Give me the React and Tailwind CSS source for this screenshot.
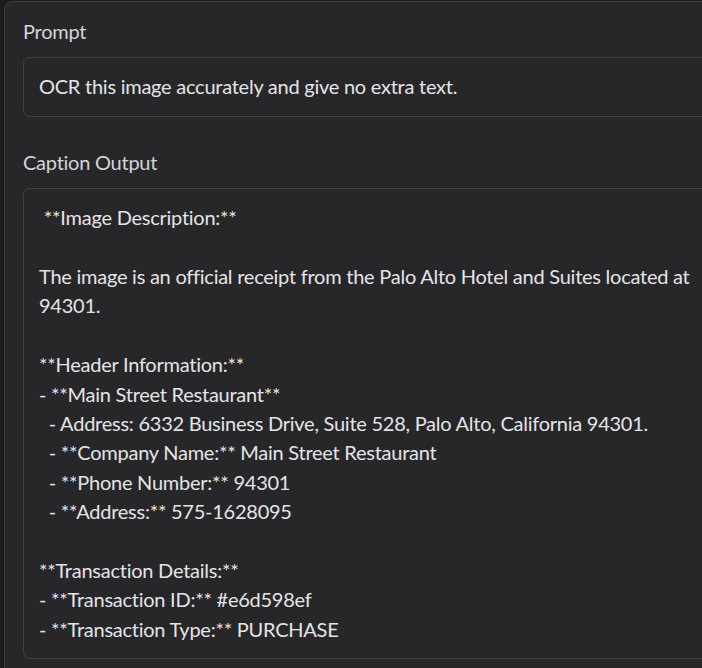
const captionLines = [
  ' **Image Description:**',
  '',
  'The image is an official receipt from the Palo Alto Hotel and Suites located at',
  '94301.',
  '',
  '**Header Information:**',
  '- **Main Street Restaurant**',
  '  - Address: 6332 Business Drive, Suite 528, Palo Alto, California 94301.',
  '  - **Company Name:** Main Street Restaurant',
  '  - **Phone Number:** 94301',
  '  - **Address:** 575-1628095',
  '',
  '**Transaction Details:**',
  '- **Transaction ID:** #e6d598ef',
  '- **Transaction Type:** PURCHASE',
];

export default function App() {
  return (
    <div
      className="w-[702px] h-[668px] overflow-hidden bg-[#1c1c1f] pl-[4px] pt-[1px]"
      style={{ fontFamily: '"Lato", "Liberation Sans", sans-serif' }}
    >
      <div className="w-[760px] h-[720px] bg-[#27272a] border border-[#3a3a3f] rounded-tl-[8px] pt-[15px] pl-[18px] text-[20px] leading-[29.4px] tracking-[-0.25px] text-[#e4e4e7]">
        {/* Prompt */}
        <div className="text-[#d4d4d8] mb-[11px]">Prompt</div>
        <div className="border border-[#3f3f46] rounded-[7px] py-[14px] px-[15px] whitespace-pre">
          OCR this image accurately and give no extra text.
        </div>

        {/* Caption Output */}
        <div className="text-[#d4d4d8] mt-[31px] mb-[11px]">Caption Output</div>
        <div className="border border-[#3f3f46] rounded-[7px] py-[14px] px-[15px]">
          {captionLines.map((line, i) => (
            <div key={i} className="whitespace-pre h-[29.4px]">{line}</div>
          ))}
        </div>
      </div>
    </div>
  );
}
